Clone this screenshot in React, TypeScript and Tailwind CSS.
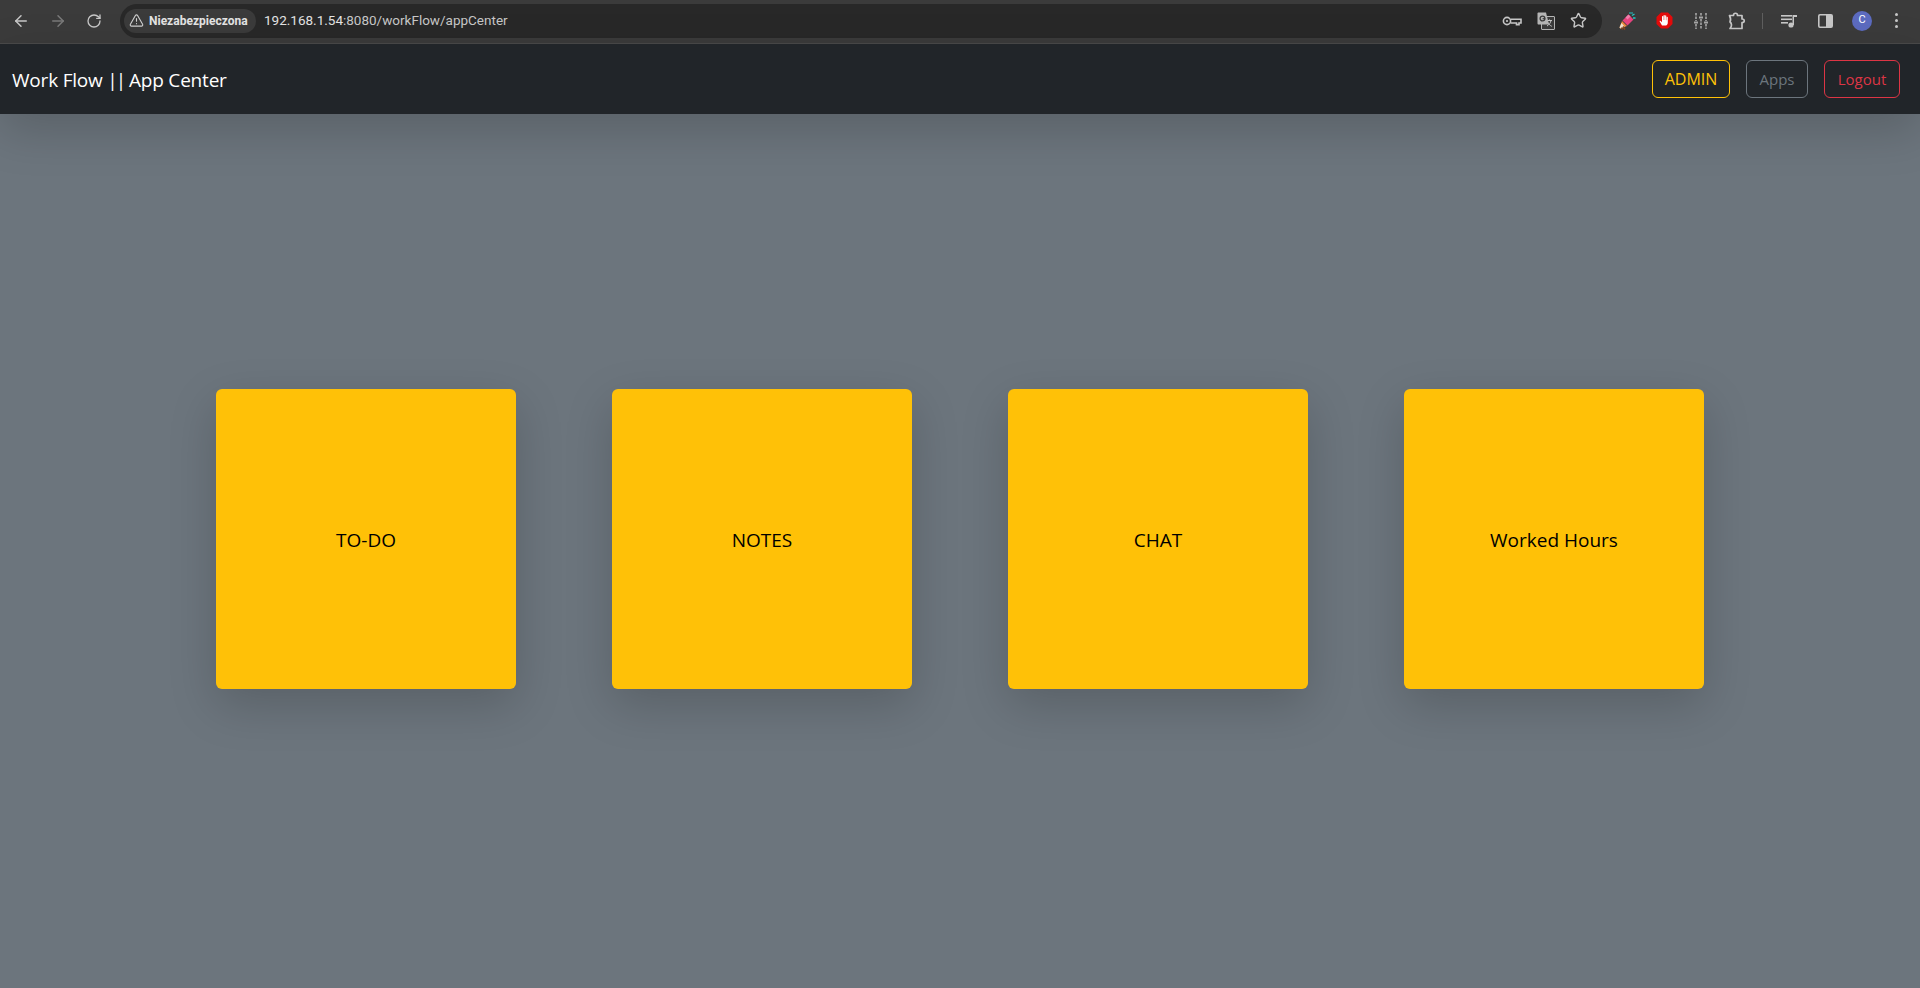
import { ArrowLeft, ArrowRight, RotateCw, Star, TriangleAlert } from "lucide-react";

const apps = ["TO-DO", "NOTES", "CHAT", "Worked Hours"];

function KeyIcon() {
  return (
    <svg width="20" height="12" viewBox="0 0 20 12" fill="none" stroke="#c7c7c7" strokeWidth="1.6">
      <circle cx="5" cy="6" r="3.6" />
      <circle cx="5" cy="6" r="1.1" fill="#c7c7c7" stroke="none" />
      <path d="M8.6 4.2H19V8H17V9.6H14.5V8H8.6" />
    </svg>
  );
}

function TranslateIcon() {
  return (
    <svg width="18" height="18" viewBox="0 0 18 18">
      <rect x="4.5" y="4.5" width="13" height="13" rx="0.5" fill="#3b3b3b" stroke="#b5b5b5" />
      <path d="M10 8.5h5M12.5 7.5v1M14 8.5c-.4 2.4-2 4.4-4 5.5M11 10.5c.7 1.5 2 3 3.8 3.8" fill="none" stroke="#c7c7c7" />
      <path d="M0.5 1.5C0.5 1 1 .5 1.5 .5H9L12 12.5H1.5c-.5 0-1-.5-1-1z" fill="#b5b5b5" />
      <circle cx="5.5" cy="6.5" r="2.4" fill="none" stroke="#3b3b3b" strokeWidth="1.3" />
      <path d="M5.6 6.7H8.2" stroke="#3b3b3b" strokeWidth="1.2" />
    </svg>
  );
}

function PartyIcon() {
  return (
    <svg width="18" height="18" viewBox="0 0 18 18">
      <path d="M4 9 9 14 2.500 16.500 1.500 15.500z" fill="#f08a3c" />
      <path d="M1.500 15.500 3.500 11 6.500 14.500 2.500 16.500z" fill="#efe3d2" />
      <path d="M4.500 8.500 10.500 2.500 15.500 7.500 9.500 13.500z" fill="#e8447f" />
      <path d="M7.500 5.500 10.500 2.500 12.500 4.500 9.500 7.500z" fill="#f27fac" />
      <path d="M11.500 1.500 12.500 .5M14 3.500l2.500-1.500M15 6H17.500M13.500 1.500l1-1" stroke="#25c6c6" strokeWidth="1.400" />
      <path d="M5 14.500 7 17.500M3.500 15.500 4.500 17.500" stroke="#8a4a20" strokeWidth="1.400" />
    </svg>
  );
}

function StopHandIcon() {
  return (
    <svg width="17" height="17" viewBox="0 0 17 17">
      <path d="M5 0.500h7L16.500 5v7L12 16.500H5L0.500 12V5z" fill="#e40b0b" />
      <path
        d="M6 13.500 3.700 9.600c-.4-.7.4-1.300 1-.7L6 10.200V4.600c0-.9 1.200-.9 1.200 0V8h.3V3.600c0-.9 1.300-.9 1.300 0V8h.3V4c0-.9 1.200-.9 1.200 0v4.200h.3V5.400c0-.9 1.200-.9 1.200 0v5.200c0 1.700-.8 2.900-2 2.900z"
        fill="#fff"
      />
    </svg>
  );
}

function MixerIcon() {
  return (
    <svg width="14" height="16" viewBox="0 0 14 16" stroke="#a8a8a8" strokeWidth="1.600">
      <path d="M2 0V8M2 11V16M7 0V3M7 6V16M12 0V8M12 11V16" strokeDasharray="2.500 1" />
      <path d="M0 9.500H4M5 4.500H9M10 9.500H14" strokeWidth="2" />
    </svg>
  );
}

function PuzzleIcon() {
  return (
    <svg width="18" height="18" viewBox="0 0 18 18" fill="none" stroke="#c7c7c7" strokeWidth="1.700" strokeLinejoin="round">
      <path d="M1.500 3.500H5.500C5.500 .5 9.500 .5 9.500 3.500H14V7C17 7 17 10.500 14 10.500V16.500H2C4 14 4 11.500 2 10C3 8 2.500 5.500 1.500 3.500Z" />
    </svg>
  );
}

function PlaylistIcon() {
  return (
    <svg width="16" height="14" viewBox="0 0 16 14" fill="#c7c7c7">
      <rect x="0" y="1" width="11" height="1.600" />
      <rect x="0" y="4.500" width="11" height="1.600" />
      <rect x="0" y="8" width="7" height="1.600" />
      <circle cx="10" cy="11" r="2.600" />
      <path d="M11.500 11V1H16V3H13V11z" />
    </svg>
  );
}

function SidebarIcon() {
  return (
    <svg width="15" height="14" viewBox="0 0 15 14">
      <rect x="0.800" y="0.800" width="13.400" height="12.400" rx="1.200" fill="none" stroke="#c7c7c7" strokeWidth="1.600" />
      <rect x="8" y="1" width="6" height="12" fill="#c7c7c7" />
    </svg>
  );
}

function BrowserBar() {
  return (
    <div className="flex h-[44px] shrink-0 items-center border-b border-[#4a4a4a] bg-[#3b3b3b] pb-[2px] pl-[12px] pr-[18px]">
      <ArrowLeft size={18} strokeWidth={2} className="text-[#c7c7c7]" />
      <ArrowRight size={18} strokeWidth={2} className="ml-[19px] text-[#7a7a7a]" />
      <RotateCw size={16} strokeWidth={2} className="ml-[19px] text-[#c7c7c7]" />

      <div className="ml-[18px] flex h-[34px] w-[1482px] items-center rounded-full bg-[#282828] pl-[4px] pr-[15px]">
        <div className="flex h-[24px] w-[132px] items-center gap-[5px] rounded-full bg-[#3b3b3b] pl-[5px] font-['Roboto',sans-serif] text-[12px] font-bold text-[#e3e3e3]">
          <TriangleAlert size={15} strokeWidth={1.800} className="text-[#d0d0d0]" />
          Niezabezpieczona
        </div>
        <div className="ml-[8px] font-['Roboto',sans-serif] text-[13.500px] text-[#c7c7c7]">
          <span className="text-[#e3e3e3]">192.168.1.54</span>:8080/workFlow/appCenter
        </div>
        <div className="ml-auto flex items-center gap-[15px]">
          <KeyIcon />
          <TranslateIcon />
          <Star size={17} strokeWidth={2} className="text-[#c7c7c7]" />
        </div>
      </div>

      <div className="ml-[16px]"><PartyIcon /></div>
      <div className="ml-[20px]"><StopHandIcon /></div>
      <div className="ml-[21px]"><MixerIcon /></div>
      <div className="ml-[20px]"><PuzzleIcon /></div>
      <div className="ml-[16px] h-[16px] w-px bg-[#5f5f5f]" />
      <div className="ml-[18px]"><PlaylistIcon /></div>
      <div className="ml-[21px]"><SidebarIcon /></div>
      <div className="ml-[19px] flex h-[20px] w-[20px] items-center justify-center rounded-full bg-[#5c6bc0] font-['Roboto',sans-serif] text-[11px] text-white">
        C
      </div>
      <div className="ml-[23px] flex flex-col gap-[3px]">
        <span className="h-[3px] w-[3px] rounded-full bg-[#c7c7c7]" />
        <span className="h-[3px] w-[3px] rounded-full bg-[#c7c7c7]" />
        <span className="h-[3px] w-[3px] rounded-full bg-[#c7c7c7]" />
      </div>
    </div>
  );
}

export default function App() {
  return (
    <div className="flex h-[988px] flex-col overflow-hidden bg-[#6c757d] font-['Open_Sans',sans-serif]">
      <BrowserBar />

      <nav className="relative flex h-[70px] shrink-0 items-center justify-between bg-[#212529] pl-[12px] pr-[20px] shadow-[0_16px_48px_rgba(0,0,0,0.175)]">
        <span className="mt-[2px] text-[19px] tracking-[-0.2px] text-white">
          Work Flow <span className="tracking-[-2px]">||</span> App Center
        </span>
        <div className="flex gap-[16px] text-[15px]">
          <button className="h-[38px] w-[78px] rounded-[6px] border border-[#ffc107] text-[16px] text-[#ffc107]">ADMIN</button>
          <button className="h-[38px] w-[62px] rounded-[6px] border border-[#6c757d] text-[#6c757d]">Apps</button>
          <button className="h-[38px] w-[76px] rounded-[6px] border border-[#dc3545] text-[#dc3545]">Logout</button>
        </div>
      </nav>

      <main className="flex justify-center gap-[96px] pt-[275px]">
        {apps.map((name) => (
          <div
            key={name}
            className="flex h-[300px] w-[300px] items-center justify-center rounded-[6px] bg-[#ffc107] pt-[2px] text-[19px] text-black shadow-[0_16px_48px_rgba(0,0,0,0.175)]"
          >
            {name}
          </div>
        ))}
      </main>
    </div>
  );
}
